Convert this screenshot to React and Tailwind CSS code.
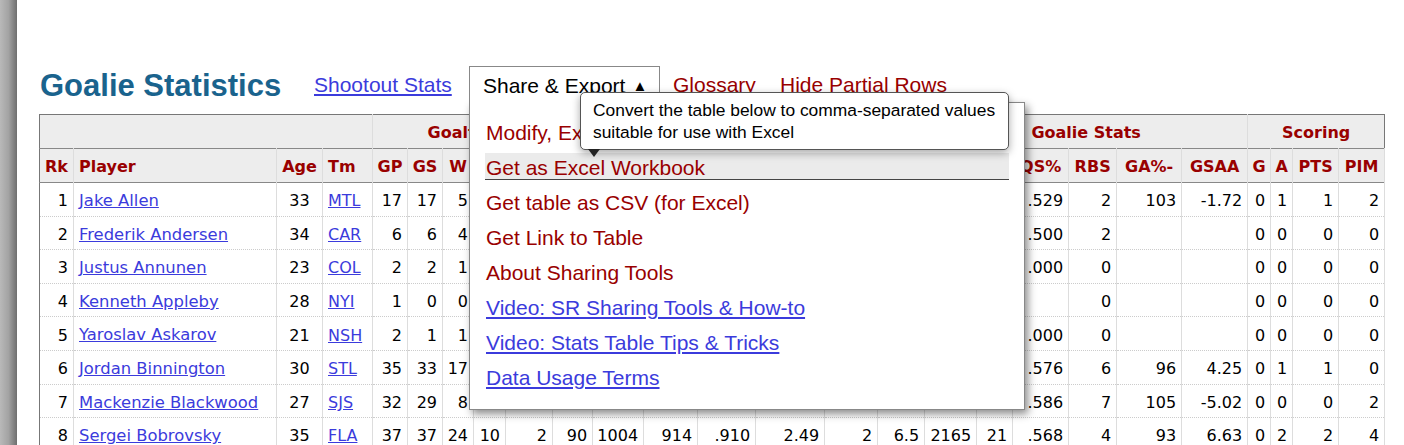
import React from "react";

const cols = [
  "w-[34px]", "w-[203px]", "w-[46px]", "w-[50px]", "w-[35px]", "w-[35px]", "w-[31px]", "w-[32px]",
  "w-[47px]", "w-[40px]", "w-[51px]", "w-[54px]", "w-[58px]", "w-[69px]", "w-[53px]", "w-[47px]",
  "w-[52px]", "w-[36px]", "w-[56px]", "w-[48px]", "w-[65px]", "w-[66px]", "w-[23px]", "w-[22px]",
  "w-[46px]", "w-[46px]",
];

const heads = ["Rk", "Player", "Age", "Tm", "GP", "GS", "W", "L", "T/O", "GA", "SA", "SV", "SV%", "GAA", "SO", "GPS", "MIN", "QS", "QS%", "RBS", "GA%-", "GSAA", "G", "A", "PTS", "PIM"];

const rows = [
  ["1", "Jake Allen", "33", "MTL", "17", "17", "5", "9", "2", "50", "494", "444", ".899", "3.08", "0", "-0.2", "974", "9", ".529", "2", "103", "-1.72", "0", "1", "1", "2"],
  ["2", "Frederik Andersen", "34", "CAR", "6", "6", "4", "1", "0", "15", "146", "131", ".897", "2.78", "0", "0.6", "324", "3", ".500", "2", "", "", "0", "0", "0", "0"],
  ["3", "Justus Annunen", "23", "COL", "2", "2", "1", "1", "0", "8", "56", "48", ".857", "4.02", "0", "-0.1", "119", "0", ".000", "0", "", "", "0", "0", "0", "0"],
  ["4", "Kenneth Appleby", "28", "NYI", "1", "0", "0", "0", "0", "1", "9", "8", ".889", "3.33", "0", "0.0", "18", "0", "", "0", "", "", "0", "0", "0", "0"],
  ["5", "Yaroslav Askarov", "21", "NSH", "2", "1", "1", "0", "0", "4", "52", "48", ".923", "2.31", "0", "0.2", "104", "0", ".000", "0", "", "", "0", "0", "0", "0"],
  ["6", "Jordan Binnington", "30", "STL", "35", "33", "17", "14", "2", "93", "1012", "919", ".908", "2.79", "1", "4.9", "2003", "19", ".576", "6", "96", "4.25", "0", "1", "1", "0"],
  ["7", "Mackenzie Blackwood", "27", "SJS", "32", "29", "8", "18", "4", "101", "1012", "911", ".900", "3.28", "2", "0.6", "1846", "17", ".586", "7", "105", "-5.02", "0", "0", "0", "2"],
  ["8", "Sergei Bobrovsky", "35", "FLA", "37", "37", "24", "10", "2", "90", "1004", "914", ".910", "2.49", "2", "6.5", "2165", "21", ".568", "4", "93", "6.63", "0", "2", "2", "4"],
];

const menu = [
  { t: "Modify, Export & Share Table", red: true },
  { t: "Get as Excel Workbook", red: true, hover: true },
  { t: "Get table as CSV (for Excel)", red: true },
  { t: "Get Link to Table", red: true },
  { t: "About Sharing Tools", red: true },
  { t: "Video: SR Sharing Tools & How-to" },
  { t: "Video: Stats Table Tips & Tricks" },
  { t: "Data Usage Terms" },
];

function cellAlign(i) {
  if (i === 1 || i === 3) return "text-left pl-[5px]";
  if (i === 2) return "text-center";
  return "text-right pr-[5px]";
}

export default function App() {
  return (
    <div className="relative w-[1404px] h-[445px] overflow-hidden bg-white flex font-['Liberation_Sans',Arial,sans-serif]">
      <div className="w-[17px] h-full shrink-0 bg-gradient-to-r from-[#b9b9b9] via-[#a3a3a3] to-[#6f6f6f]" />
      <div className="pl-[22px] pt-[66px]">
        <div className="flex items-center h-[36px]">
          <div className="w-[275px] shrink-0 text-[31px] font-bold text-[#1a638d] leading-none pl-[1px] pt-[2px]">Goalie Statistics</div>
          <div className="w-[155px] shrink-0 text-[21px] text-[#3b3bdc] underline leading-none pt-[1px]">Shootout Stats</div>
          <div className="w-[191px] shrink-0 h-[37px] self-start relative z-20 bg-white border-l border-t border-r border-[#888] flex items-center pl-[13px] text-[21px] text-black leading-none">
            Share &amp; Export <span className="ml-[7px] text-[15px]">▲</span>
          </div>
          <div className="ml-[13px] w-[107px] shrink-0 text-[21px] text-[#990000] leading-none pt-[1px]">Glossary</div>
          <div className="text-[21px] text-[#990000] leading-none pt-[1px]">Hide Partial Rows</div>
        </div>
        <table className="mt-[12px] table-fixed border-collapse w-[1345px] font-['DejaVu_Sans',Verdana,sans-serif] text-[16px] border border-[#777]">
          <colgroup>
            {cols.map((c, i) => (
              <col key={i} className={c} />
            ))}
          </colgroup>
          <thead>
            <tr className="h-[34px] bg-[#ededed] border-b border-[#888]">
              <th colSpan={4} className="border-r border-[#ddd]"></th>
              <th colSpan={6} className="border-r border-[#ddd] text-center font-bold text-[#990000] pt-[2px]">Goaltending</th>
              <th colSpan={6} className="border-r border-[#ddd] text-center font-bold text-[#990000] pt-[2px]"></th>
              <th colSpan={6} className="border-r border-[#ddd] text-center font-bold text-[#990000] pt-[2px]">Goalie Stats</th>
              <th colSpan={4} className="text-center font-bold text-[#990000] pt-[2px]">Scoring</th>
            </tr>
            <tr className="h-[34px] bg-[#ededed] border-b border-[#888]">
              {heads.map((h, i) => (
                <th
                  key={i}
                  className={`font-bold text-[#990000] whitespace-nowrap border-r border-[#ddd] pt-[2px] ${i === 1 || i === 3 ? "text-left pl-[5px]" : "text-center"}`}
                >
                  {h}
                </th>
              ))}
            </tr>
          </thead>
          <tbody>
            {rows.map((r, ri) => (
              <tr key={ri} className="h-[33.6px] border-b border-dotted border-[#ccc]">
                {r.map((v, i) => (
                  <td key={i} className={`whitespace-nowrap border-r border-[#ddd] text-black pt-[4px] ${cellAlign(i)}`}>
                    {i === 1 ? (
                      <span className="text-[#3b3bdc] underline text-[16.4px]">{v}</span>
                    ) : i === 3 ? (
                      <span className="text-[#3b3bdc] underline">{v}</span>
                    ) : (
                      v
                    )}
                  </td>
                ))}
              </tr>
            ))}
          </tbody>
        </table>
      </div>

      {/* Dropdown panel */}
      <div className="absolute left-[469px] top-[102px] w-[556px] h-[308px] z-10 bg-white border border-[#888] shadow-[3px_4px_8px_rgba(0,0,0,0.45)] px-[15px] pt-[13px]">
        {menu.map((m, i) => (
          <div key={i} className="h-[35px] pt-[2px]">
            <div
              className={`h-[27px] leading-[30px] pl-[1px] text-[21px] whitespace-nowrap border-b ${m.hover ? "bg-[#ebebeb] border-[#444]" : "border-transparent"} ${m.red ? "text-[#990000]" : "text-[#3b3bdc] underline"}`}
            >
              {m.t}
            </div>
          </div>
        ))}
      </div>

      {/* Tooltip */}
      <div className="absolute left-[580px] top-[92px] w-[429px] h-[58px] z-30 bg-white border border-[#555] rounded-[5px] shadow-[0_3px_8px_rgba(0,0,0,0.35)] pl-[12px] pt-[6px] text-[17.4px] leading-[22px] text-black">
        <div>Convert the table below to comma-separated values</div>
        <div>suitable for use with Excel</div>
      </div>
      <svg className="absolute left-[588px] top-[149px] z-30" width="12" height="8" viewBox="0 0 12 8">
        <polygon points="0,0 12,0 6,8" fill="#222" />
      </svg>
    </div>
  );
}
